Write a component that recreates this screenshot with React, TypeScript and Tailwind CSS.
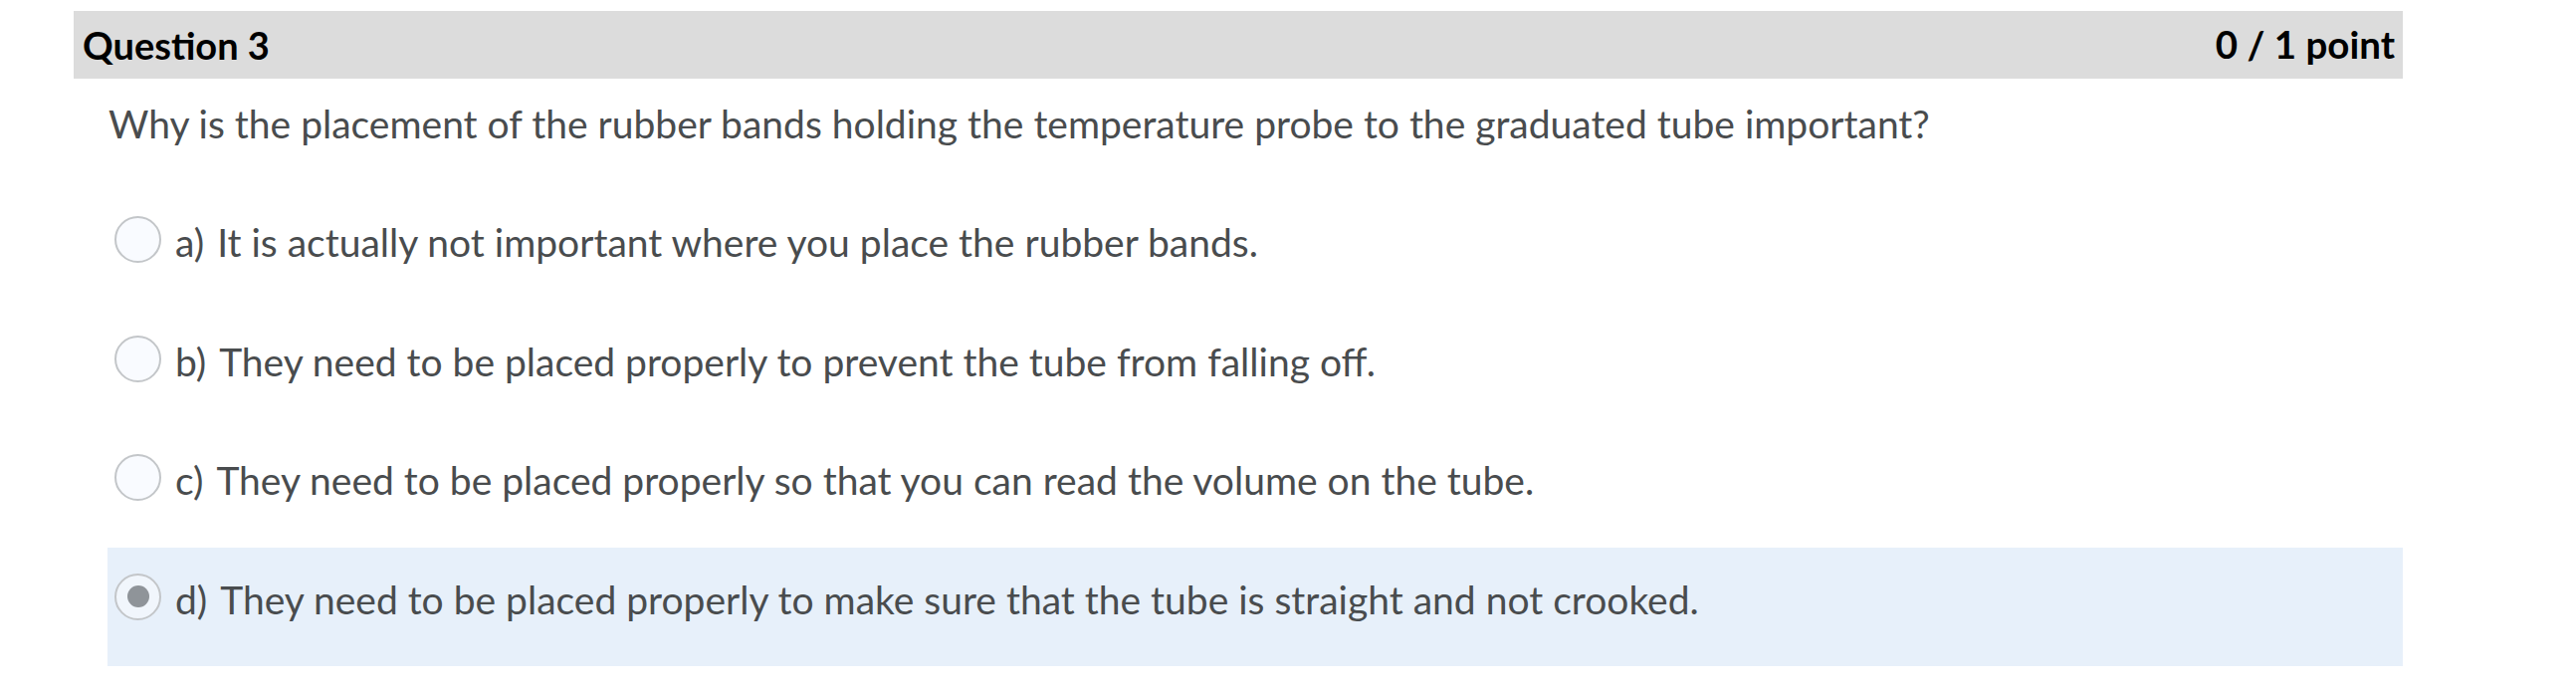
import React from 'react';

const options = [
  { id: 'a', label: 'a)', text: 'It is actually not important where you place the rubber bands.' },
  { id: 'b', label: 'b)', text: 'They need to be placed properly to prevent the tube from falling off.' },
  { id: 'c', label: 'c)', text: 'They need to be placed properly so that you can read the volume on the tube.' },
  { id: 'd', label: 'd)', text: 'They need to be placed properly to make sure that the tube is straight and not crooked.' },
];

export default function App() {
  const selected = 'd';

  return (
    <div className="w-[2588px] h-[696px] bg-white font-['Lato','Liberation_Sans',sans-serif]">
      <div className="pt-[11px] pl-[74px]">
        <div className="w-[2340px] h-[68px] bg-[#dcdcdc] flex items-center justify-between pl-[9px] pr-[8px]">
          <h2 className="text-[38px] font-bold text-black">Question 3</h2>
          <span className="text-[38.5px] font-bold text-black">0 / 1 point</span>
        </div>

        <div className="pl-[35px] h-[112px] pt-[23px]">
          <p className="text-[39px] leading-[44px] text-[#494c4e]">
            Why is the placement of the rubber bands holding the temperature probe to the graduated tube important?
          </p>
        </div>

        <div className="ml-[34px] w-[2306px]">
          {options.map((opt) => {
            const isSel = opt.id === selected;
            return (
              <label
                key={opt.id}
                className={`flex items-start h-[119.5px] pt-[26px] pl-[7px] ${isSel ? 'bg-[#e7f0fa]' : ''}`}
              >
                <span
                  className={`w-[47px] h-[47px] rounded-full border-2 border-[#c3c6c9] flex items-center justify-center shrink-0 ${isSel ? 'bg-[#f1f6fc]' : 'bg-[#f9fbff]'}`}
                >
                  {isSel && <span className="w-[22px] h-[22px] rounded-full bg-[#8f9499]" />}
                </span>
                <span className="ml-[14px] pt-[3px] text-[39px] leading-[47px] text-[#494c4e] flex">
                  <span>{opt.label}</span>
                  <span className="ml-[13px]">{opt.text}</span>
                </span>
              </label>
            );
          })}
        </div>
      </div>
    </div>
  );
}
